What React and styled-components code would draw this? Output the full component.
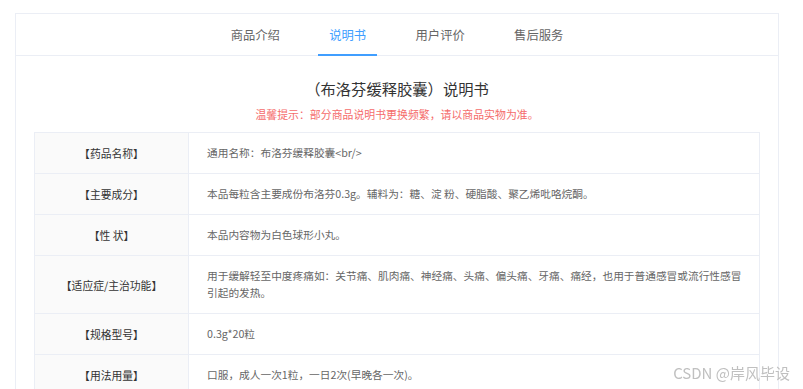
import React from "react";
import styled, { createGlobalStyle } from "styled-components";

const tabs = ["商品介绍", "说明书", "用户评价", "售后服务"];

const rows = [
  { label: "【药品名称】", value: "通用名称：布洛芬缓释胶囊<br/>" },
  {
    label: "【主要成分】",
    value: "本品每粒含主要成份布洛芬0.3g。辅料为：糖、淀 粉、硬脂酸、聚乙烯吡咯烷酮。",
  },
  { label: "【性 状】", value: "本品内容物为白色球形小丸。" },
  {
    label: "【适应症/主治功能】",
    value:
      "用于缓解轻至中度疼痛如：关节痛、肌肉痛、神经痛、头痛、偏头痛、牙痛、痛经，也用于普通感冒或流行性感冒引起的发热。",
  },
  { label: "【规格型号】", value: "0.3g*20粒" },
  { label: "【用法用量】", value: "口服，成人一次1粒，一日2次(早晚各一次)。" },
  { label: "【不良反应】", value: "少数病人可出现恶心、呕吐、胃烧灼感或轻度消化不良。" },
];

export default function App() {
  return (
    <>
      <GlobalStyle />
      <Card>
        <TabBar>
          {tabs.map((t) => (
            <Tab key={t} $active={t === "说明书"}>
              {t}
            </Tab>
          ))}
        </TabBar>
        <Body>
          <Title>（布洛芬缓释胶囊）说明书</Title>
          <Notice>温馨提示：部分商品说明书更换频繁，请以商品实物为准。</Notice>
          <Table>
            {rows.map((r) => (
              <Row key={r.label}>
                <Label>{r.label}</Label>
                <Value>{r.value}</Value>
              </Row>
            ))}
          </Table>
        </Body>
      </Card>
      <Watermark>CSDN @岸风毕设</Watermark>
    </>
  );
}

const GlobalStyle = createGlobalStyle`
  body {
    margin: 0;
    background: #fff;
    font-family: "Noto Sans CJK SC", "Noto Sans", sans-serif;
  }
`;

const Card = styled.div`
  margin: 13px 0 0 15px;
  width: 764px;
  box-sizing: border-box;
  border: 1px solid #ebeef5;
  border-bottom: none;
`;

const TabBar = styled.div`
  height: 41px;
  display: flex;
  justify-content: center;
  border-bottom: 1px solid #ebeef5;
`;

const Tab = styled.div`
  display: flex;
  align-items: center;
  height: 42px;
  box-sizing: border-box;
  padding: 2px 11px 0;
  margin: 0 13.7px -1px;
  font-size: 12.3px;
  color: ${(p) => (p.$active ? "#409eff" : "#666")};
  border-bottom: 2px solid ${(p) => (p.$active ? "#409eff" : "transparent")};
`;

const Body = styled.div`
  padding: 21px 18px 0;
  display: flex;
  flex-direction: column;
  align-items: center;
`;

const Title = styled.div`
  font-size: 15.3px;
  line-height: 22px;
  color: #333;
`;

const Notice = styled.div`
  margin-top: 7px;
  font-size: 10.9px;
  line-height: 16px;
  color: #f56c6c;
`;

const Table = styled.div`
  margin-top: 10px;
  align-self: stretch;
  border: 1px solid #ebeef5;
  border-bottom: none;
`;

const Row = styled.div`
  display: grid;
  grid-template-columns: 154px 1fr;
  border-bottom: 1px solid #ebeef5;
`;

const Label = styled.div`
  background: #fafafa;
  border-right: 1px solid #ebeef5;
  display: flex;
  align-items: center;
  justify-content: center;
  font-size: 10.8px;
  color: #333;
`;

const Value = styled.div`
  padding: 11px 10px 12px 18px;
  font-size: 10.7px;
  line-height: 17px;
  color: #666;
`;

const Watermark = styled.div`
  position: fixed;
  right: 13px;
  bottom: 6px;
  font-size: 15px;
  color: #c0c0c0;
  text-shadow: 0 0 2px #fff;
`;
